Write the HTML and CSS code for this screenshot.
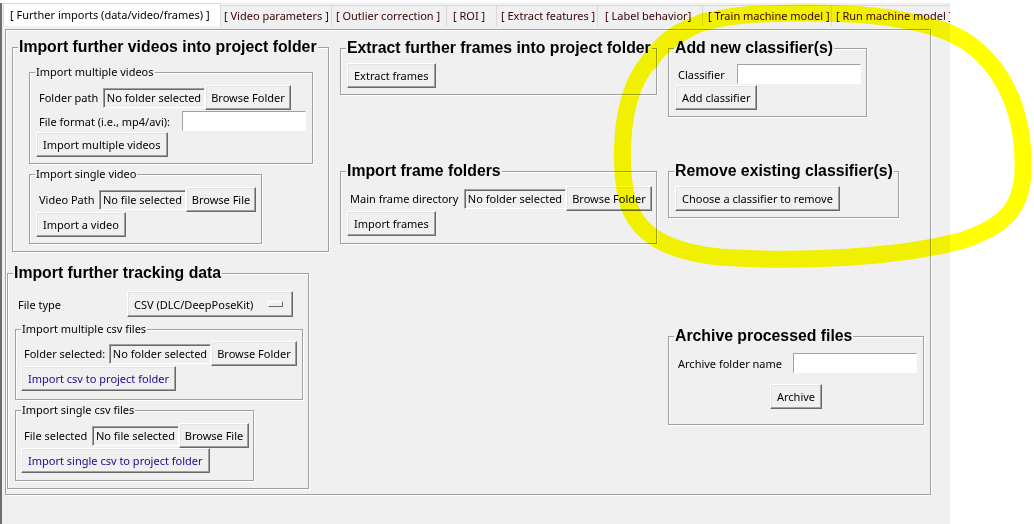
FILE: index.html
```html
<!DOCTYPE html>
<html>
<head>
<meta charset="utf-8">
<title>SimBA - Further imports</title>
<link rel="stylesheet" href="styles.css">
</head>
<body>
<div class="window">
  <div class="tabs">
    <div class="tab tab-sel">[ Further imports (data/video/frames) ]</div>
    <div class="tab tab-video">[ Video parameters ]</div>
    <div class="tab tab-outlier">[ Outlier correction ]</div>
    <div class="tab tab-roi">[ ROI ]</div>
    <div class="tab tab-extract">[ Extract features ]</div>
    <div class="tab tab-label">[ Label behavior]</div>
    <div class="tab tab-train">[ Train machine model ]</div>
    <div class="tab tab-run">[ Run machine model ]</div>
  </div>
  <div class="pane">
    <div class="col">
      <div class="lf videos">
        <div class="cap head">Import further videos into project folder</div>
        <div class="lf-body videos-body">
          <div class="lf sub multi-videos">
            <div class="cap">Import multiple videos</div>
            <div class="lf-body sub-body">
              <div class="row">
                <span class="lbl lbl-folderpath">Folder path</span>
                <span class="sunken path-folder">No folder selected</span>
                <span class="btn browse-folder">Browse Folder</span>
              </div>
              <div class="row entry-row">
                <span class="lbl lbl-format">File format (i.e., mp4/avi):</span>
                <span class="entry"></span>
              </div>
              <span class="btn">Import multiple videos</span>
            </div>
          </div>
          <div class="lf sub single-video">
            <div class="cap">Import single video</div>
            <div class="lf-body sub-body">
              <div class="row">
                <span class="lbl lbl-videopath">Video Path</span>
                <span class="sunken path-file">No file selected</span>
                <span class="btn browse-file">Browse File</span>
              </div>
              <span class="btn">Import a video</span>
            </div>
          </div>
        </div>
      </div>

      <div class="lf tracking">
        <div class="cap head">Import further tracking data</div>
        <div class="lf-body tracking-body">
          <div class="row filetype-row">
            <span class="lbl lbl-filetype">File type</span>
            <span class="btn optmenu">CSV (DLC/DeepPoseKit)<span class="indicator"></span></span>
          </div>
          <div class="lf sub multi-csv">
            <div class="cap">Import multiple csv files</div>
            <div class="lf-body csv-body">
              <div class="row">
                <span class="lbl lbl-folderselected">Folder selected:</span>
                <span class="sunken path-folder">No folder selected</span>
                <span class="btn browse-folder">Browse Folder</span>
              </div>
              <span class="btn navy">Import csv to project folder</span>
            </div>
          </div>
          <div class="lf sub single-csv">
            <div class="cap">Import single csv files</div>
            <div class="lf-body csv-body single-csv-body">
              <div class="row">
                <span class="lbl lbl-fileselected">File selected</span>
                <span class="sunken path-file">No file selected</span>
                <span class="btn browse-file">Browse File</span>
              </div>
              <span class="btn navy">Import single csv to project folder</span>
            </div>
          </div>
        </div>
      </div>
    </div>

    <div class="col">
      <div class="lf extract">
        <div class="cap head">Extract further frames into project folder</div>
        <div class="lf-body frame-body">
          <span class="btn">Extract frames</span>
        </div>
      </div>
      <div class="lf frame-folders">
        <div class="cap head">Import frame folders</div>
        <div class="lf-body frame-body">
          <div class="row">
            <span class="lbl lbl-mainframe">Main frame directory</span>
            <span class="sunken path-folder">No folder selected</span>
            <span class="btn browse-folder">Browse Folder</span>
          </div>
          <span class="btn">Import frames</span>
        </div>
      </div>
    </div>

    <div class="col">
      <div class="lf add-clf">
        <div class="cap head">Add new classifier(s)</div>
        <div class="lf-body clf-body">
          <div class="row entry-row">
            <span class="lbl lbl-classifier">Classifier</span>
            <span class="entry"></span>
          </div>
          <span class="btn">Add classifier</span>
        </div>
      </div>
      <div class="lf remove-clf">
        <div class="cap head">Remove existing classifier(s)</div>
        <div class="lf-body frame-body">
          <span class="btn">Choose a classifier to remove</span>
        </div>
      </div>
      <div class="lf archive">
        <div class="cap head">Archive processed files</div>
        <div class="lf-body archive-body">
          <div class="row entry-row">
            <span class="lbl lbl-archive">Archive folder name</span>
            <span class="entry"></span>
          </div>
          <span class="btn archive-btn">Archive</span>
        </div>
      </div>
    </div>
  </div>
</div>

<svg class="highlight" width="1034" height="524" viewBox="0 0 1034 524" xmlns="http://www.w3.org/2000/svg">
  <path d="M 650 62 C 666 32, 700 17, 760 14 C 830 11, 900 13, 950 33 C 995 53, 1022 100, 1023 160 C 1025 205, 1008 226, 960 241 C 900 257, 800 263, 720 257 C 670 252, 637 236, 627 200 C 620 170, 620 120, 634 86 C 645 60, 668 36, 705 21" fill="none" stroke="#ffff00" stroke-width="17" stroke-linecap="round" stroke-linejoin="round"/>
</svg>
</body>
</html>
```

FILE: styles.css
```css
* { box-sizing: border-box; }

body {
  margin: 0;
  background: #ffffff;
  font-family: "Noto Sans", "DejaVu Sans", sans-serif;
  font-size: 11px;
  color: #000000;
  position: relative;
}

.window {
  width: 950px;
  height: 521px;
  margin-top: 3px;
  background: #f0f0f0;
  border-left: 2px solid #6e6e6e;
  overflow: hidden;
}

/* ---------- notebook tabs ---------- */
.tabs {
  display: flex;
  align-items: flex-end;
  height: 23px;
  padding-left: 1px;
  white-space: nowrap;
}

.tab {
  height: 21px;
  line-height: 19px;
  padding: 0 0 0 4px;
  border: 1px solid #d9d9d9;
  border-bottom: 0;
  margin-right: -1px;
  color: #3a0000;
  flex-shrink: 0;
  overflow: hidden;
}

.tab-sel {
  width: 218px;
  height: 23px;
  line-height: 21px;
  background: #ffffff;
  color: #000000;
  padding-left: 6px;
}
.tab-video { width: 112px; padding-left: 3px; }
.tab-outlier { width: 116px; padding-left: 4px; }
.tab-roi { width: 51px; padding-left: 6px; }
.tab-extract { width: 102px; padding-left: 4px; }
.tab-label { width: 106px; padding-left: 7px; }
.tab-train { width: 130px; padding-left: 5px; }
.tab-run { width: 140px; padding-left: 4px; }

/* ---------- notebook page ---------- */
.pane {
  margin: 3px 0 0 3px;
  width: 926px;
  height: 466px;
  border: 1px solid #a0a0a0;
  box-shadow: 1px 1px 0 #ffffff, inset 1px 1px 0 #ffffff;
  display: grid;
  grid-template-columns: 328px 328px 1fr;
  align-items: start;
}

.col {
  display: flex;
  flex-direction: column;
  align-items: flex-start;
}

/* ---------- label frames ---------- */
.lf {
  border: 1px solid #a0a0a0;
  box-shadow: 1px 1px 0 #ffffff, inset 1px 1px 0 #ffffff;
}

.cap {
  width: fit-content;
  margin: -9px 0 0 5px;
  padding: 0 1px;
  line-height: 16px;
  height: 16px;
  background: #f0f0f0;
  white-space: nowrap;
}

.head {
  font-family: "Liberation Sans", Arial, sans-serif;
  font-weight: bold;
  font-size: 15.8px;
}

.lf-body {
  display: flex;
  flex-direction: column;
  align-items: flex-start;
}

/* ---------- rows and widgets ---------- */
.row {
  display: flex;
  align-items: center;
  height: 25px;
}

.entry-row { height: 22px; }

.lbl {
  padding: 0 3px;
  white-space: nowrap;
  flex-shrink: 0;
}

.btn {
  display: flex;
  align-items: center;
  justify-content: center;
  height: 25px;
  padding: 0 6px;
  background: #f0f0f0;
  border: 1px solid;
  border-color: #ffffff #696969 #696969 #ffffff;
  box-shadow: inset -1px -1px 0 #a0a0a0, inset 1px 1px 0 #e3e3e3;
  white-space: nowrap;
  flex-shrink: 0;
}

.navy { color: #1a0a8c; }

.sunken {
  display: flex;
  align-items: center;
  justify-content: center;
  height: 20px;
  border: 1px solid;
  border-color: #a0a0a0 #ffffff #ffffff #a0a0a0;
  box-shadow: inset 1px 1px 0 #696969;
  white-space: nowrap;
  flex-shrink: 0;
}

.entry {
  display: block;
  width: 124px;
  height: 20px;
  background: #ffffff;
  border: 1px solid;
  border-color: #a0a0a0 #ffffff #ffffff #a0a0a0;
  flex-shrink: 0;
}

.path-folder { width: 102px; }
.path-file { width: 87px; }
.browse-folder { width: 86px; }
.browse-file { width: 70px; }

.lbl-folderpath { width: 67px; }
.lbl-videopath { width: 63px; }
.lbl-format { width: 146px; }
.lbl-mainframe { width: 117px; }
.lbl-folderselected { width: 88px; }
.lbl-fileselected { width: 71px; }
.lbl-classifier { width: 62px; }
.lbl-archive { width: 118px; }
.lbl-filetype { width: 112px; }

/* ---------- column 0 ---------- */
.videos {
  margin: 17px 0 0 6px;
  width: 317px;
  height: 205px;
}
.videos-body { padding-left: 16px; }

.sub .cap { margin-left: 5px; }
.sub-body { padding: 5px 0 0 6px; }

.multi-videos {
  margin-top: 17px;
  width: 284px;
  height: 92px;
}

.single-video {
  margin-top: 10px;
  width: 233px;
  height: 70px;
}

.tracking {
  margin: 21px 0 0 1px;
  width: 302px;
  height: 216px;
}
.tracking-body { padding-left: 7px; }

.filetype-row {
  margin-top: 10px;
  height: 26px;
}

.optmenu {
  width: 166px;
  height: 26px;
  justify-content: flex-start;
  padding-left: 6px;
}

.indicator {
  width: 15px;
  height: 6px;
  margin-left: 15px;
  border: 1px solid;
  border-color: #ffffff #696969 #696969 #ffffff;
}

.multi-csv {
  margin-top: 12px;
  width: 288px;
  height: 71px;
}
.csv-body { padding: 4px 0 0 5px; }
.single-csv-body { padding-top: 5px; }

.single-csv {
  margin-top: 10px;
  width: 239px;
  height: 71px;
}

/* ---------- column 1 ---------- */
.frame-body { padding: 7px 0 0 6px; }

.extract {
  margin: 18px 0 0 6px;
  width: 317px;
  height: 47px;
}

.frame-folders {
  margin: 76px 0 0 6px;
  width: 317px;
  height: 73px;
}

/* ---------- column 2 ---------- */
.add-clf {
  margin: 18px 0 0 6px;
  width: 199px;
  height: 69px;
}
.clf-body { padding: 7px 0 0 6px; }

.remove-clf {
  margin: 54px 0 0 6px;
  width: 231px;
  height: 47px;
}

.archive {
  margin: 118px 0 0 6px;
  width: 256px;
  height: 89px;
}
.archive-body { padding: 8px 0 0 6px; }
.archive-btn {
  align-self: center;
  margin: 10px 0 0 -6px;
}

/* ---------- highlighter annotation ---------- */
.highlight {
  position: absolute;
  top: 0;
  left: 0;
  pointer-events: none;
  mix-blend-mode: multiply;
}
```
